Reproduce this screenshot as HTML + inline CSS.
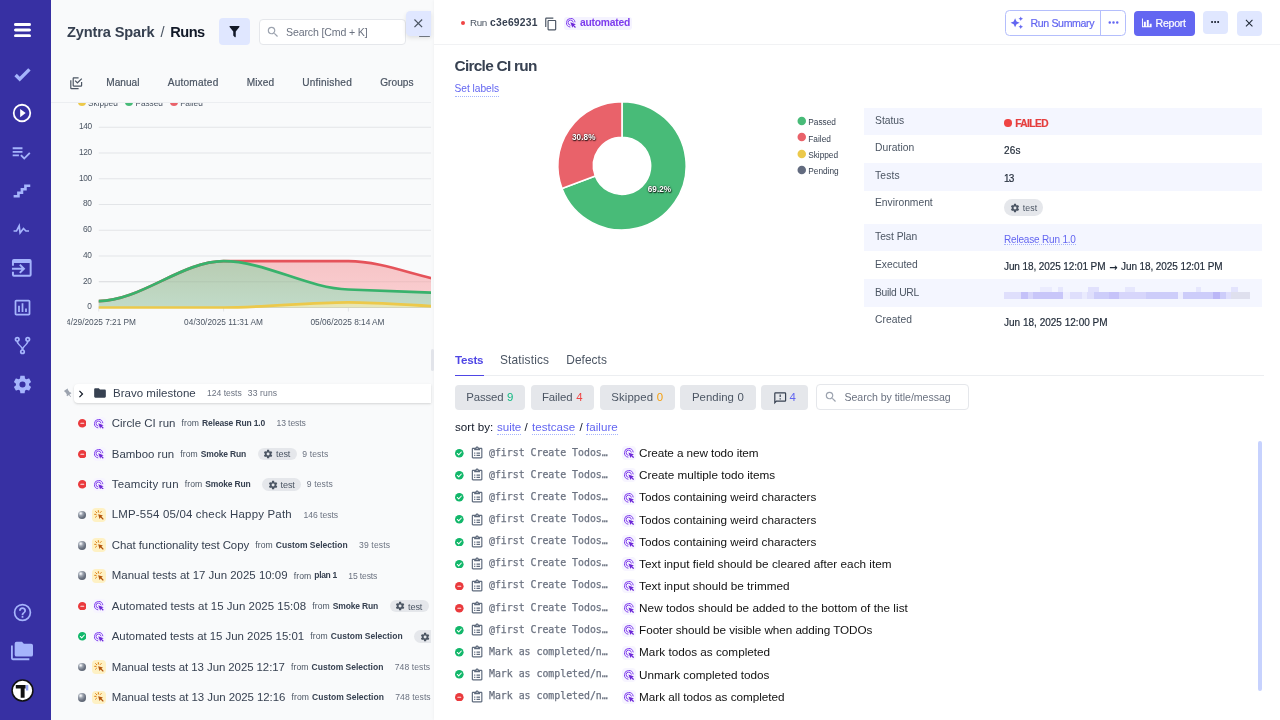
<!DOCTYPE html>
<html lang="en"><head><meta charset="utf-8"><title>Zyntra Spark / Runs</title><style>
*{margin:0;padding:0;box-sizing:border-box}
html,body{width:1280px;height:720px;overflow:hidden;background:#fff}
body{position:relative;font-family:"Liberation Sans",Arial,sans-serif;-webkit-font-smoothing:antialiased}
.t{position:absolute;white-space:nowrap;display:block}
.b{position:absolute;display:block}
.clip{position:absolute;overflow:hidden}
#app{position:absolute;left:0;top:0;width:1280px;height:720px;will-change:transform}
</style></head>
<body>
<div id="app">
<div class="b" style="left:0px;top:0px;width:1280px;height:720px;background:#ffffff;"></div>
<div class="b" style="left:50px;top:0px;width:384px;height:720px;background:#f9fafb;"></div>
<section aria-label="Runs trend chart">
<div class="clip" style="left:51px;top:102.6px;width:380px;height:245.4px">
<div class="b" style="left:26.65px;top:-5.2px;width:8.2px;height:8.2px;background:#ecc94b;border-radius:50%"></div>
<span class="t" style="left:37.00px;top:-7px;font-size:8.3px;line-height:14px;color:#4b5563;letter-spacing:-0.035px;">Skipped</span>
<div class="b" style="left:74.15px;top:-5.2px;width:8.2px;height:8.2px;background:#48bb78;border-radius:50%"></div>
<span class="t" style="left:84.50px;top:-7px;font-size:8.3px;line-height:14px;color:#4b5563;letter-spacing:-0.072px;">Passed</span>
<div class="b" style="left:118.9px;top:-5.2px;width:8.2px;height:8.2px;background:#e9626a;border-radius:50%"></div>
<span class="t" style="left:129.25px;top:-7px;font-size:8.3px;line-height:14px;color:#4b5563;letter-spacing:-0.018px;">Failed</span>
<svg class="b" style="left:0;top:0" width="380" height="245" viewBox="51 103 380 245"><line x1="98.75" x2="431" y1="307.50" y2="307.50" stroke="#e3e5e8" stroke-width="1"/><line x1="98.75" x2="431" y1="281.75" y2="281.75" stroke="#e3e5e8" stroke-width="1"/><line x1="98.75" x2="431" y1="256.00" y2="256.00" stroke="#e3e5e8" stroke-width="1"/><line x1="98.75" x2="431" y1="230.25" y2="230.25" stroke="#e3e5e8" stroke-width="1"/><line x1="98.75" x2="431" y1="204.50" y2="204.50" stroke="#e3e5e8" stroke-width="1"/><line x1="98.75" x2="431" y1="178.75" y2="178.75" stroke="#e3e5e8" stroke-width="1"/><line x1="98.75" x2="431" y1="153.00" y2="153.00" stroke="#e3e5e8" stroke-width="1"/><line x1="98.75" x2="431" y1="127.25" y2="127.25" stroke="#e3e5e8" stroke-width="1"/><line x1="98.75" x2="98.75" y1="307.50" y2="311.50" stroke="#e3e5e8" stroke-width="1"/><line x1="223.60" x2="223.60" y1="307.50" y2="311.50" stroke="#e3e5e8" stroke-width="1"/><line x1="348.40" x2="348.40" y1="307.50" y2="311.50" stroke="#e3e5e8" stroke-width="1"/><defs><linearGradient id="gr" gradientUnits="userSpaceOnUse" x1="0" y1="261" x2="0" y2="307"><stop offset="0" stop-color="#f6c4c6"/><stop offset="1" stop-color="#fbd0d3"/></linearGradient><linearGradient id="gg" gradientUnits="userSpaceOnUse" x1="0" y1="261" x2="0" y2="307"><stop offset="0" stop-color="#b8ccb2"/><stop offset="1" stop-color="#c1dbc8"/></linearGradient><linearGradient id="gy" gradientUnits="userSpaceOnUse" x1="0" y1="300" x2="0" y2="308"><stop offset="0" stop-color="#e6e2a8"/><stop offset="1" stop-color="#e9e8b8"/></linearGradient></defs><path d="M98.75 301.06 C140.37 301.06 181.98 261.15 223.60 261.15 C265.20 261.15 306.80 261.15 348.40 261.15 C390.00 261.15 431.60 284.32 473.20 284.32 C514.80 284.32 556.40 284.32 598.00 284.32 L598.00 307.50 L98.75 307.50 Z" fill="url(#gr)" stroke="none"/><path d="M98.75 301.06 C140.37 301.06 181.98 261.15 223.60 261.15 C265.20 261.15 306.80 288.23 348.40 289.48 C390.00 290.72 431.60 293.12 473.20 294.37 C514.80 295.62 556.40 294.97 598.00 295.27 L598.00 307.50 L98.75 307.50 Z" fill="url(#gg)" stroke="none"/><path d="M98.75 307.50 C140.37 307.50 181.98 307.50 223.60 307.50 C265.20 307.50 306.80 302.35 348.40 302.35 C390.00 302.35 431.60 307.50 473.20 307.50 C514.80 307.50 556.40 307.50 598.00 307.50 L598.00 307.50 L98.75 307.50 Z" fill="url(#gy)" stroke="none"/><line x1="98.75" x2="431" y1="307.50" y2="307.50" stroke="#000" stroke-opacity=".05" stroke-width="1"/><line x1="98.75" x2="431" y1="281.75" y2="281.75" stroke="#000" stroke-opacity=".05" stroke-width="1"/><path d="M98.75 301.06 C140.37 301.06 181.98 261.15 223.60 261.15 C265.20 261.15 306.80 261.15 348.40 261.15 C390.00 261.15 431.60 284.32 473.20 284.32 C514.80 284.32 556.40 284.32 598.00 284.32" fill="none" stroke="#e5535a" stroke-width="2.7" stroke-linejoin="round"/><path d="M98.75 301.06 C140.37 301.06 181.98 261.15 223.60 261.15 C265.20 261.15 306.80 288.23 348.40 289.48 C390.00 290.72 431.60 293.12 473.20 294.37 C514.80 295.62 556.40 294.97 598.00 295.27" fill="none" stroke="#38b26c" stroke-width="2.7" stroke-linejoin="round"/><path d="M98.75 307.50 C140.37 307.50 181.98 307.50 223.60 307.50 C265.20 307.50 306.80 302.35 348.40 302.35 C390.00 302.35 431.60 307.50 473.20 307.50 C514.80 307.50 556.40 307.50 598.00 307.50" fill="none" stroke="#ecc94b" stroke-width="2.7" stroke-linejoin="round"/></svg>
<span class="t" style="left:36.20px;top:196px;font-size:8.3px;line-height:14px;color:#4b5563;">0</span>
<span class="t" style="left:32.10px;top:171px;font-size:8.3px;line-height:14px;color:#4b5563;letter-spacing:-0.366px;">20</span>
<span class="t" style="left:32.10px;top:145px;font-size:8.3px;line-height:14px;color:#4b5563;letter-spacing:-0.366px;">40</span>
<span class="t" style="left:32.10px;top:119px;font-size:8.3px;line-height:14px;color:#4b5563;letter-spacing:-0.366px;">60</span>
<span class="t" style="left:32.10px;top:93px;font-size:8.3px;line-height:14px;color:#4b5563;letter-spacing:-0.366px;">80</span>
<span class="t" style="left:28.10px;top:68px;font-size:8.3px;line-height:14px;color:#4b5563;letter-spacing:-0.449px;">100</span>
<span class="t" style="left:28.10px;top:42px;font-size:8.3px;line-height:14px;color:#4b5563;letter-spacing:-0.449px;">120</span>
<span class="t" style="left:28.10px;top:16px;font-size:8.3px;line-height:14px;color:#4b5563;letter-spacing:-0.449px;">140</span>
<span class="t" style="left:10.50px;top:212px;font-size:8.3px;line-height:14px;color:#4b5563;letter-spacing:-0.014px;">04/29/2025 7:21 PM</span>
<span class="t" style="left:133.10px;top:212px;font-size:8.3px;line-height:14px;color:#4b5563;letter-spacing:0.037px;">04/30/2025 11:31 AM</span>
<span class="t" style="left:259.50px;top:212px;font-size:8.3px;line-height:14px;color:#4b5563;letter-spacing:-0.017px;">05/06/2025 8:14 AM</span>
</div>
<div class="b" style="left:51px;top:314px;width:16px;height:16px;background:#f9fafb;"></div>
</section>
<header aria-label="Runs toolbar">
<span class="t" style="left:67.00px;top:22px;font-size:14.6px;line-height:20px;color:#374151;font-weight:700;letter-spacing:-0.146px;">Zyntra Spark</span>
<span class="t" style="left:160.50px;top:22px;font-size:14.6px;line-height:20px;color:#4b5563;">/</span>
<span class="t" style="left:170.25px;top:22px;font-size:14.6px;line-height:20px;color:#111827;font-weight:700;letter-spacing:-0.500px;">Runs</span>
<div class="b" style="left:218.5px;top:18px;width:31px;height:27px;background:#e0e7ff;border-radius:4px"></div>
<svg class="b" style="left:226.5px;top:24px;" width="15" height="15" viewBox="0 0 24 24"><path fill="#111827" d="M14,12V19.88C14.04,20.18 13.94,20.5 13.71,20.71C13.32,21.1 12.69,21.1 12.3,20.71L10.29,18.7C10.06,18.47 9.96,18.16 10,17.87V12H9.97L4.21,4.62C3.87,4.19 3.95,3.56 4.38,3.22C4.57,3.08 4.78,3 5,3V3H19V3C19.22,3 19.43,3.08 19.62,3.22C20.05,3.56 20.13,4.19 19.79,4.62L14.03,12H14Z"/></svg>
<div class="b" style="left:258.5px;top:18.5px;width:147.5px;height:26px;background:#ffffff;border:1px solid #e5e7eb;border-radius:4px"></div>
<svg class="b" style="left:266px;top:24.6px;" width="14" height="14" viewBox="0 0 24 24"><path fill="#9ca3af" d="M9.5,3A6.5,6.5 0 0,1 16,9.5C16,11.11 15.41,12.59 14.44,13.73L14.71,14H15.5L20.5,19L19,20.5L14,15.5V14.71L13.73,14.44C12.59,15.41 11.11,16 9.5,16A6.5,6.5 0 0,1 3,9.5A6.5,6.5 0 0,1 9.5,3M9.5,5C7,5 5,7 5,9.5C5,12 7,14 9.5,14C12,14 14,12 14,9.5C14,7 12,5 9.5,5Z"/></svg>
<span class="t" style="left:286.00px;top:24px;font-size:10.6px;line-height:16px;color:#6b7280;letter-spacing:-0.153px;">Search [Cmd + K]</span>
<svg class="b" style="left:69.4px;top:76px;" width="14.4" height="14.4" viewBox="0 0 24 24"><path fill="#4b5563" d="M20,16V10H22V16A2,2 0 0,1 20,18H8C6.89,18 6,17.1 6,16V4C6,2.89 6.89,2 8,2H16V4H8V16H20M10.91,7.08L14,10.17L20.59,3.58L22,5L14,13L9.5,8.5L10.91,7.08M16,20V22H4A2,2 0 0,1 2,20V7H4V20H16Z"/></svg>
<span class="t" style="left:106.25px;top:75px;font-size:10.1px;line-height:15px;color:#4b5563;letter-spacing:0.021px;-webkit-text-stroke:.2px #4b5563;">Manual</span>
<span class="t" style="left:167.75px;top:75px;font-size:10.1px;line-height:15px;color:#4b5563;letter-spacing:0.211px;-webkit-text-stroke:.2px #4b5563;">Automated</span>
<span class="t" style="left:246.75px;top:75px;font-size:10.1px;line-height:15px;color:#4b5563;letter-spacing:0.112px;-webkit-text-stroke:.2px #4b5563;">Mixed</span>
<span class="t" style="left:302.25px;top:75px;font-size:10.1px;line-height:15px;color:#4b5563;letter-spacing:0.203px;-webkit-text-stroke:.2px #4b5563;">Unfinished</span>
<span class="t" style="left:380.25px;top:75px;font-size:10.1px;line-height:15px;color:#4b5563;letter-spacing:0.021px;-webkit-text-stroke:.2px #4b5563;">Groups</span>
<div class="b" style="left:51px;top:102px;width:380px;height:1px;background:#eceef1;"></div>
</header>
<section aria-label="Runs list">
<div class="b" style="left:74px;top:383.5px;width:357px;height:19px;background:#ffffff;border-radius:4px 0 0 4px;box-shadow:0 1px 3px rgba(0,0,0,.10),0 1px 2px rgba(0,0,0,.06)"></div>
<svg class="b" style="left:62.5px;top:387.5px;transform:rotate(-35deg)" width="10.5" height="10.5" viewBox="0 0 24 24"><path fill="#9ca3af" d="M16,12V4H17V2H7V4H8V12L6,14V16H11.2V22H12.8V16H18V14L16,12Z"/></svg>
<svg class="b" style="left:73.5px;top:386.5px;" width="14" height="14" viewBox="0 0 24 24"><path fill="#111827" d="M8.59,16.58L13.17,12L8.59,7.41L10,6L16,12L10,18L8.59,16.58Z"/></svg>
<svg class="b" style="left:93.3px;top:386px;" width="14" height="14" viewBox="0 0 24 24"><path fill="#374151" d="M10,4H4C2.89,4 2,4.89 2,6V18A2,2 0 0,0 4,20H20A2,2 0 0,0 22,18V8C22,6.89 21.1,6 20,6H12L10,4Z"/></svg>
<span class="t" style="left:113.00px;top:385px;font-size:11.5px;line-height:16px;color:#374151;letter-spacing:0.020px;">Bravo milestone</span>
<span class="t" style="left:207.00px;top:386px;font-size:8.6px;line-height:14px;color:#6b7280;letter-spacing:-0.017px;">124 tests</span>
<span class="t" style="left:247.75px;top:386px;font-size:8.6px;line-height:14px;color:#6b7280;letter-spacing:0.116px;">33 runs</span>
<div class="clip" style="left:51px;top:405px;width:380px;height:315px">
<svg class="b" style="left:26.50px;top:14.30px" width="8.6" height="8.6" viewBox="0 0 20 20"><circle cx="10" cy="10" r="10" fill="#ea3a3d"/><rect x="5.4" y="8.7" width="9.2" height="2.6" rx="1.1" fill="#fde8e8"/></svg>
<div class="b" style="left:41.5px;top:11.85px;width:13.5px;height:13.5px;background:#f7f5ff;border-radius:4px"></div>
<svg class="b" style="left:43.30px;top:13.80px" width="9.8" height="9.8" viewBox="0 0 24 24"><g fill="none" stroke="#7c3aed" stroke-width="2.3" stroke-linecap="round"><path d="M21.6 9.4A10.4 10.4 0 1 0 9.4 21.6"/><path d="M17.2 9.8A6.2 6.2 0 1 0 9.8 17.2"/></g><path fill="#6d28d9" d="M10.4 10.4L23.6 15.2L19.2 17.1L23.8 21.7L21.7 23.8L17.1 19.2L15.2 23.6Z"/></svg>
<span class="t" style="left:60.75px;top:10px;font-size:11.45px;line-height:16px;color:#374151;letter-spacing:0.010px;">Circle CI run</span>
<span class="t" style="left:130.60px;top:11px;font-size:8.6px;line-height:14px;color:#4b5563;letter-spacing:0.075px;">from</span>
<span class="t" style="left:151.10px;top:11px;font-size:8.5px;line-height:14px;color:#374151;font-weight:700;letter-spacing:-0.147px;">Release Run 1.0</span>
<span class="t" style="left:225.50px;top:11px;font-size:8.6px;line-height:14px;color:#6b7280;letter-spacing:-0.108px;">13 tests</span>
<svg class="b" style="left:26.50px;top:44.73px" width="8.6" height="8.6" viewBox="0 0 20 20"><circle cx="10" cy="10" r="10" fill="#ea3a3d"/><rect x="5.4" y="8.7" width="9.2" height="2.6" rx="1.1" fill="#fde8e8"/></svg>
<div class="b" style="left:41.5px;top:42.28px;width:13.5px;height:13.5px;background:#f7f5ff;border-radius:4px"></div>
<svg class="b" style="left:43.30px;top:44.23px" width="9.8" height="9.8" viewBox="0 0 24 24"><g fill="none" stroke="#7c3aed" stroke-width="2.3" stroke-linecap="round"><path d="M21.6 9.4A10.4 10.4 0 1 0 9.4 21.6"/><path d="M17.2 9.8A6.2 6.2 0 1 0 9.8 17.2"/></g><path fill="#6d28d9" d="M10.4 10.4L23.6 15.2L19.2 17.1L23.8 21.7L21.7 23.8L17.1 19.2L15.2 23.6Z"/></svg>
<span class="t" style="left:60.75px;top:41px;font-size:11.45px;line-height:16px;color:#374151;letter-spacing:0.012px;">Bamboo run</span>
<span class="t" style="left:129.35px;top:42px;font-size:8.6px;line-height:14px;color:#4b5563;letter-spacing:0.075px;">from</span>
<span class="t" style="left:149.85px;top:42px;font-size:8.5px;line-height:14px;color:#374151;font-weight:700;letter-spacing:-0.168px;">Smoke Run</span>
<div class="b" style="left:206.5px;top:42.83px;width:39px;height:12.5px;background:#e5e7eb;border-radius:7px"></div>
<svg class="b" style="left:212.1px;top:44.13px;" width="10.2" height="10.2" viewBox="0 0 24 24"><path fill="#4b5563" d="M12,15.5A3.5,3.5 0 0,1 8.5,12A3.5,3.5 0 0,1 12,8.5A3.5,3.5 0 0,1 15.5,12A3.5,3.5 0 0,1 12,15.5M19.43,12.97C19.47,12.65 19.5,12.33 19.5,12C19.5,11.67 19.47,11.34 19.43,11L21.54,9.37C21.73,9.22 21.78,8.95 21.66,8.73L19.66,5.27C19.54,5.05 19.27,4.96 19.05,5.05L16.56,6.05C16.04,5.66 15.5,5.32 14.87,5.07L14.5,2.42C14.46,2.18 14.25,2 14,2H10C9.75,2 9.54,2.18 9.5,2.42L9.13,5.07C8.5,5.32 7.96,5.66 7.44,6.05L4.95,5.05C4.73,4.96 4.46,5.05 4.34,5.27L2.34,8.73C2.21,8.95 2.27,9.22 2.46,9.37L4.57,11C4.53,11.34 4.5,11.67 4.5,12C4.5,12.33 4.53,12.65 4.57,12.97L2.46,14.63C2.27,14.78 2.21,15.05 2.34,15.27L4.34,18.73C4.46,18.95 4.73,19.03 4.95,18.95L7.44,17.94C7.96,18.34 8.5,18.68 9.13,18.93L9.5,21.58C9.54,21.82 9.75,22 10,22H14C14.25,22 14.46,21.82 14.5,21.58L14.87,18.93C15.5,18.67 16.04,18.34 16.56,17.94L19.05,18.95C19.27,19.03 19.54,18.95 19.66,18.73L21.66,15.27C21.78,15.05 21.73,14.78 21.54,14.63L19.43,12.97Z"/></svg>
<span class="t" style="left:225.10px;top:42px;font-size:9.1px;line-height:14px;color:#4b5563;letter-spacing:-0.117px;">test</span>
<span class="t" style="left:251.30px;top:42px;font-size:8.6px;line-height:14px;color:#6b7280;letter-spacing:0.095px;">9 tests</span>
<svg class="b" style="left:26.50px;top:75.16px" width="8.6" height="8.6" viewBox="0 0 20 20"><circle cx="10" cy="10" r="10" fill="#ea3a3d"/><rect x="5.4" y="8.7" width="9.2" height="2.6" rx="1.1" fill="#fde8e8"/></svg>
<div class="b" style="left:41.5px;top:72.71px;width:13.5px;height:13.5px;background:#f7f5ff;border-radius:4px"></div>
<svg class="b" style="left:43.30px;top:74.66px" width="9.8" height="9.8" viewBox="0 0 24 24"><g fill="none" stroke="#7c3aed" stroke-width="2.3" stroke-linecap="round"><path d="M21.6 9.4A10.4 10.4 0 1 0 9.4 21.6"/><path d="M17.2 9.8A6.2 6.2 0 1 0 9.8 17.2"/></g><path fill="#6d28d9" d="M10.4 10.4L23.6 15.2L19.2 17.1L23.8 21.7L21.7 23.8L17.1 19.2L15.2 23.6Z"/></svg>
<span class="t" style="left:60.75px;top:71px;font-size:11.45px;line-height:16px;color:#374151;letter-spacing:0.175px;">Teamcity run</span>
<span class="t" style="left:133.85px;top:72px;font-size:8.6px;line-height:14px;color:#4b5563;letter-spacing:0.075px;">from</span>
<span class="t" style="left:154.35px;top:72px;font-size:8.5px;line-height:14px;color:#374151;font-weight:700;letter-spacing:-0.168px;">Smoke Run</span>
<div class="b" style="left:211px;top:73.26px;width:39px;height:12.5px;background:#e5e7eb;border-radius:7px"></div>
<svg class="b" style="left:216.6px;top:74.56px;" width="10.2" height="10.2" viewBox="0 0 24 24"><path fill="#4b5563" d="M12,15.5A3.5,3.5 0 0,1 8.5,12A3.5,3.5 0 0,1 12,8.5A3.5,3.5 0 0,1 15.5,12A3.5,3.5 0 0,1 12,15.5M19.43,12.97C19.47,12.65 19.5,12.33 19.5,12C19.5,11.67 19.47,11.34 19.43,11L21.54,9.37C21.73,9.22 21.78,8.95 21.66,8.73L19.66,5.27C19.54,5.05 19.27,4.96 19.05,5.05L16.56,6.05C16.04,5.66 15.5,5.32 14.87,5.07L14.5,2.42C14.46,2.18 14.25,2 14,2H10C9.75,2 9.54,2.18 9.5,2.42L9.13,5.07C8.5,5.32 7.96,5.66 7.44,6.05L4.95,5.05C4.73,4.96 4.46,5.05 4.34,5.27L2.34,8.73C2.21,8.95 2.27,9.22 2.46,9.37L4.57,11C4.53,11.34 4.5,11.67 4.5,12C4.5,12.33 4.53,12.65 4.57,12.97L2.46,14.63C2.27,14.78 2.21,15.05 2.34,15.27L4.34,18.73C4.46,18.95 4.73,19.03 4.95,18.95L7.44,17.94C7.96,18.34 8.5,18.68 9.13,18.93L9.5,21.58C9.54,21.82 9.75,22 10,22H14C14.25,22 14.46,21.82 14.5,21.58L14.87,18.93C15.5,18.67 16.04,18.34 16.56,17.94L19.05,18.95C19.27,19.03 19.54,18.95 19.66,18.73L21.66,15.27C21.78,15.05 21.73,14.78 21.54,14.63L19.43,12.97Z"/></svg>
<span class="t" style="left:229.60px;top:73px;font-size:9.1px;line-height:14px;color:#4b5563;letter-spacing:-0.117px;">test</span>
<span class="t" style="left:255.80px;top:72px;font-size:8.6px;line-height:14px;color:#6b7280;letter-spacing:0.095px;">9 tests</span>
<div class="b" style="left:26.50px;top:105.59px;width:8.6px;height:8.6px;border-radius:50%;background:radial-gradient(circle at 34% 30%,#ffffff 0,#e5e7eb 9%,#9ca3af 28%,#6b7280 58%,#4b5563 100%)"></div>
<div class="b" style="left:41.2px;top:102.99px;width:13.8px;height:13.8px;background:#fef1c4;border-radius:4px"></div>
<svg class="b" style="left:43.00px;top:104.79px" width="10.4" height="10.4" viewBox="0 0 24 24"><g stroke="#d97706" stroke-width="2.3" stroke-linecap="round"><path d="M10 1.6V4.8M1.6 10H4.8M3.8 3.8L6.1 6.1M16.6 3.6L14.4 5.8M3.6 16.6L5.8 14.4"/></g><path fill="#b45309" d="M9.6 9.6L20.6 12.8L17.2 15.1L22.6 20.5L20.5 22.6L15.1 17.2L12.8 20.6Z"/></svg>
<span class="t" style="left:60.75px;top:101px;font-size:11.45px;line-height:16px;color:#374151;letter-spacing:0.195px;">LMP-554 05/04 check Happy Path</span>
<span class="t" style="left:252.40px;top:103px;font-size:8.6px;line-height:14px;color:#6b7280;letter-spacing:-0.017px;">146 tests</span>
<div class="b" style="left:26.50px;top:136.02px;width:8.6px;height:8.6px;border-radius:50%;background:radial-gradient(circle at 34% 30%,#ffffff 0,#e5e7eb 9%,#9ca3af 28%,#6b7280 58%,#4b5563 100%)"></div>
<div class="b" style="left:41.2px;top:133.42px;width:13.8px;height:13.8px;background:#fef1c4;border-radius:4px"></div>
<svg class="b" style="left:43.00px;top:135.22px" width="10.4" height="10.4" viewBox="0 0 24 24"><g stroke="#d97706" stroke-width="2.3" stroke-linecap="round"><path d="M10 1.6V4.8M1.6 10H4.8M3.8 3.8L6.1 6.1M16.6 3.6L14.4 5.8M3.6 16.6L5.8 14.4"/></g><path fill="#b45309" d="M9.6 9.6L20.6 12.8L17.2 15.1L22.6 20.5L20.5 22.6L15.1 17.2L12.8 20.6Z"/></svg>
<span class="t" style="left:60.75px;top:132px;font-size:11.45px;line-height:16px;color:#374151;letter-spacing:-0.067px;">Chat functionality test Copy</span>
<span class="t" style="left:204.35px;top:133px;font-size:8.6px;line-height:14px;color:#4b5563;letter-spacing:0.075px;">from</span>
<span class="t" style="left:224.85px;top:133px;font-size:8.5px;line-height:14px;color:#374151;font-weight:700;letter-spacing:-0.002px;">Custom Selection</span>
<span class="t" style="left:308.00px;top:133px;font-size:8.6px;line-height:14px;color:#6b7280;letter-spacing:0.142px;">39 tests</span>
<div class="b" style="left:26.50px;top:166.45px;width:8.6px;height:8.6px;border-radius:50%;background:radial-gradient(circle at 34% 30%,#ffffff 0,#e5e7eb 9%,#9ca3af 28%,#6b7280 58%,#4b5563 100%)"></div>
<div class="b" style="left:41.2px;top:163.85px;width:13.8px;height:13.8px;background:#fef1c4;border-radius:4px"></div>
<svg class="b" style="left:43.00px;top:165.65px" width="10.4" height="10.4" viewBox="0 0 24 24"><g stroke="#d97706" stroke-width="2.3" stroke-linecap="round"><path d="M10 1.6V4.8M1.6 10H4.8M3.8 3.8L6.1 6.1M16.6 3.6L14.4 5.8M3.6 16.6L5.8 14.4"/></g><path fill="#b45309" d="M9.6 9.6L20.6 12.8L17.2 15.1L22.6 20.5L20.5 22.6L15.1 17.2L12.8 20.6Z"/></svg>
<span class="t" style="left:60.75px;top:162px;font-size:11.45px;line-height:16px;color:#374151;letter-spacing:0.009px;">Manual tests at 17 Jun 2025 10:09</span>
<span class="t" style="left:242.85px;top:164px;font-size:8.6px;line-height:14px;color:#4b5563;letter-spacing:0.075px;">from</span>
<span class="t" style="left:263.35px;top:163px;font-size:8.5px;line-height:14px;color:#374151;font-weight:700;letter-spacing:-0.344px;">plan 1</span>
<span class="t" style="left:297.25px;top:164px;font-size:8.6px;line-height:14px;color:#6b7280;letter-spacing:-0.140px;">15 tests</span>
<svg class="b" style="left:26.50px;top:196.88px" width="8.6" height="8.6" viewBox="0 0 20 20"><circle cx="10" cy="10" r="10" fill="#ea3a3d"/><rect x="5.4" y="8.7" width="9.2" height="2.6" rx="1.1" fill="#fde8e8"/></svg>
<div class="b" style="left:41.5px;top:194.43px;width:13.5px;height:13.5px;background:#f7f5ff;border-radius:4px"></div>
<svg class="b" style="left:43.30px;top:196.38px" width="9.8" height="9.8" viewBox="0 0 24 24"><g fill="none" stroke="#7c3aed" stroke-width="2.3" stroke-linecap="round"><path d="M21.6 9.4A10.4 10.4 0 1 0 9.4 21.6"/><path d="M17.2 9.8A6.2 6.2 0 1 0 9.8 17.2"/></g><path fill="#6d28d9" d="M10.4 10.4L23.6 15.2L19.2 17.1L23.8 21.7L21.7 23.8L17.1 19.2L15.2 23.6Z"/></svg>
<span class="t" style="left:60.75px;top:193px;font-size:11.45px;line-height:16px;color:#374151;letter-spacing:0.027px;">Automated tests at 15 Jun 2025 15:08</span>
<span class="t" style="left:261.35px;top:194px;font-size:8.6px;line-height:14px;color:#4b5563;letter-spacing:0.075px;">from</span>
<span class="t" style="left:281.85px;top:194px;font-size:8.5px;line-height:14px;color:#374151;font-weight:700;letter-spacing:-0.168px;">Smoke Run</span>
<div class="b" style="left:338.5px;top:194.98px;width:39px;height:12.5px;background:#e5e7eb;border-radius:7px"></div>
<svg class="b" style="left:344.1px;top:196.28px;" width="10.2" height="10.2" viewBox="0 0 24 24"><path fill="#4b5563" d="M12,15.5A3.5,3.5 0 0,1 8.5,12A3.5,3.5 0 0,1 12,8.5A3.5,3.5 0 0,1 15.5,12A3.5,3.5 0 0,1 12,15.5M19.43,12.97C19.47,12.65 19.5,12.33 19.5,12C19.5,11.67 19.47,11.34 19.43,11L21.54,9.37C21.73,9.22 21.78,8.95 21.66,8.73L19.66,5.27C19.54,5.05 19.27,4.96 19.05,5.05L16.56,6.05C16.04,5.66 15.5,5.32 14.87,5.07L14.5,2.42C14.46,2.18 14.25,2 14,2H10C9.75,2 9.54,2.18 9.5,2.42L9.13,5.07C8.5,5.32 7.96,5.66 7.44,6.05L4.95,5.05C4.73,4.96 4.46,5.05 4.34,5.27L2.34,8.73C2.21,8.95 2.27,9.22 2.46,9.37L4.57,11C4.53,11.34 4.5,11.67 4.5,12C4.5,12.33 4.53,12.65 4.57,12.97L2.46,14.63C2.27,14.78 2.21,15.05 2.34,15.27L4.34,18.73C4.46,18.95 4.73,19.03 4.95,18.95L7.44,17.94C7.96,18.34 8.5,18.68 9.13,18.93L9.5,21.58C9.54,21.82 9.75,22 10,22H14C14.25,22 14.46,21.82 14.5,21.58L14.87,18.93C15.5,18.67 16.04,18.34 16.56,17.94L19.05,18.95C19.27,19.03 19.54,18.95 19.66,18.73L21.66,15.27C21.78,15.05 21.73,14.78 21.54,14.63L19.43,12.97Z"/></svg>
<span class="t" style="left:357.10px;top:195px;font-size:9.1px;line-height:14px;color:#4b5563;letter-spacing:-0.117px;">test</span>
<svg class="b" style="left:26.50px;top:227.31px" width="8.6" height="8.6" viewBox="0 0 20 20"><circle cx="10" cy="10" r="10" fill="#12b76a"/><path d="M5.3 10.4L8.6 13.6L14.8 7" fill="none" stroke="#fff" stroke-width="2.4" stroke-linecap="round" stroke-linejoin="round"/></svg>
<div class="b" style="left:41.5px;top:224.86px;width:13.5px;height:13.5px;background:#f7f5ff;border-radius:4px"></div>
<svg class="b" style="left:43.30px;top:226.81px" width="9.8" height="9.8" viewBox="0 0 24 24"><g fill="none" stroke="#7c3aed" stroke-width="2.3" stroke-linecap="round"><path d="M21.6 9.4A10.4 10.4 0 1 0 9.4 21.6"/><path d="M17.2 9.8A6.2 6.2 0 1 0 9.8 17.2"/></g><path fill="#6d28d9" d="M10.4 10.4L23.6 15.2L19.2 17.1L23.8 21.7L21.7 23.8L17.1 19.2L15.2 23.6Z"/></svg>
<span class="t" style="left:60.75px;top:223px;font-size:11.45px;line-height:16px;color:#374151;letter-spacing:-0.028px;">Automated tests at 15 Jun 2025 15:01</span>
<span class="t" style="left:259.35px;top:224px;font-size:8.6px;line-height:14px;color:#4b5563;letter-spacing:0.075px;">from</span>
<span class="t" style="left:279.85px;top:224px;font-size:8.5px;line-height:14px;color:#374151;font-weight:700;letter-spacing:-0.002px;">Custom Selection</span>
<div class="b" style="left:363px;top:225.41px;width:39px;height:12.5px;background:#e5e7eb;border-radius:7px"></div>
<svg class="b" style="left:368.6px;top:226.71px;" width="10.2" height="10.2" viewBox="0 0 24 24"><path fill="#4b5563" d="M12,15.5A3.5,3.5 0 0,1 8.5,12A3.5,3.5 0 0,1 12,8.5A3.5,3.5 0 0,1 15.5,12A3.5,3.5 0 0,1 12,15.5M19.43,12.97C19.47,12.65 19.5,12.33 19.5,12C19.5,11.67 19.47,11.34 19.43,11L21.54,9.37C21.73,9.22 21.78,8.95 21.66,8.73L19.66,5.27C19.54,5.05 19.27,4.96 19.05,5.05L16.56,6.05C16.04,5.66 15.5,5.32 14.87,5.07L14.5,2.42C14.46,2.18 14.25,2 14,2H10C9.75,2 9.54,2.18 9.5,2.42L9.13,5.07C8.5,5.32 7.96,5.66 7.44,6.05L4.95,5.05C4.73,4.96 4.46,5.05 4.34,5.27L2.34,8.73C2.21,8.95 2.27,9.22 2.46,9.37L4.57,11C4.53,11.34 4.5,11.67 4.5,12C4.5,12.33 4.53,12.65 4.57,12.97L2.46,14.63C2.27,14.78 2.21,15.05 2.34,15.27L4.34,18.73C4.46,18.95 4.73,19.03 4.95,18.95L7.44,17.94C7.96,18.34 8.5,18.68 9.13,18.93L9.5,21.58C9.54,21.82 9.75,22 10,22H14C14.25,22 14.46,21.82 14.5,21.58L14.87,18.93C15.5,18.67 16.04,18.34 16.56,17.94L19.05,18.95C19.27,19.03 19.54,18.95 19.66,18.73L21.66,15.27C21.78,15.05 21.73,14.78 21.54,14.63L19.43,12.97Z"/></svg>
<span class="t" style="left:381.60px;top:225px;font-size:9.1px;line-height:14px;color:#4b5563;letter-spacing:-0.117px;">test</span>
<div class="b" style="left:26.50px;top:257.74px;width:8.6px;height:8.6px;border-radius:50%;background:radial-gradient(circle at 34% 30%,#ffffff 0,#e5e7eb 9%,#9ca3af 28%,#6b7280 58%,#4b5563 100%)"></div>
<div class="b" style="left:41.2px;top:255.14px;width:13.8px;height:13.8px;background:#fef1c4;border-radius:4px"></div>
<svg class="b" style="left:43.00px;top:256.94px" width="10.4" height="10.4" viewBox="0 0 24 24"><g stroke="#d97706" stroke-width="2.3" stroke-linecap="round"><path d="M10 1.6V4.8M1.6 10H4.8M3.8 3.8L6.1 6.1M16.6 3.6L14.4 5.8M3.6 16.6L5.8 14.4"/></g><path fill="#b45309" d="M9.6 9.6L20.6 12.8L17.2 15.1L22.6 20.5L20.5 22.6L15.1 17.2L12.8 20.6Z"/></svg>
<span class="t" style="left:60.75px;top:254px;font-size:11.45px;line-height:16px;color:#374151;letter-spacing:-0.074px;">Manual tests at 13 Jun 2025 12:17</span>
<span class="t" style="left:240.10px;top:255px;font-size:8.6px;line-height:14px;color:#4b5563;letter-spacing:0.075px;">from</span>
<span class="t" style="left:260.60px;top:255px;font-size:8.5px;line-height:14px;color:#374151;font-weight:700;letter-spacing:-0.002px;">Custom Selection</span>
<span class="t" style="left:343.75px;top:255px;font-size:8.6px;line-height:14px;color:#6b7280;letter-spacing:0.067px;">748 tests</span>
<div class="b" style="left:26.50px;top:288.17px;width:8.6px;height:8.6px;border-radius:50%;background:radial-gradient(circle at 34% 30%,#ffffff 0,#e5e7eb 9%,#9ca3af 28%,#6b7280 58%,#4b5563 100%)"></div>
<div class="b" style="left:41.2px;top:285.57px;width:13.8px;height:13.8px;background:#fef1c4;border-radius:4px"></div>
<svg class="b" style="left:43.00px;top:287.37px" width="10.4" height="10.4" viewBox="0 0 24 24"><g stroke="#d97706" stroke-width="2.3" stroke-linecap="round"><path d="M10 1.6V4.8M1.6 10H4.8M3.8 3.8L6.1 6.1M16.6 3.6L14.4 5.8M3.6 16.6L5.8 14.4"/></g><path fill="#b45309" d="M9.6 9.6L20.6 12.8L17.2 15.1L22.6 20.5L20.5 22.6L15.1 17.2L12.8 20.6Z"/></svg>
<span class="t" style="left:60.75px;top:284px;font-size:11.45px;line-height:16px;color:#374151;letter-spacing:-0.059px;">Manual tests at 13 Jun 2025 12:16</span>
<span class="t" style="left:240.60px;top:285px;font-size:8.6px;line-height:14px;color:#4b5563;letter-spacing:0.075px;">from</span>
<span class="t" style="left:261.10px;top:285px;font-size:8.5px;line-height:14px;color:#374151;font-weight:700;letter-spacing:-0.002px;">Custom Selection</span>
<span class="t" style="left:344.25px;top:285px;font-size:8.6px;line-height:14px;color:#6b7280;letter-spacing:0.067px;">748 tests</span>
</div>
</section>
<nav aria-label="Main navigation">
<div class="b" style="left:0px;top:0px;width:50.6px;height:720px;background:#3730a3;"></div>
<svg class="b" style="left:13.9px;top:22.8px" width="17" height="14.2" viewBox="0 0 17 14.2"><g fill="#fff"><rect x="0" y="0" width="17" height="3" rx="1.5"/><rect x="0" y="5.6" width="17" height="3" rx="1.5"/><rect x="0" y="11.2" width="17" height="3" rx="1.5"/></g></svg>
<svg class="b" style="left:11.8px;top:64.2px;" width="20.6" height="20.6" viewBox="0 0 24 24"><path fill="#a5b4fc" d="M9,20.42L2.79,14.21L5.62,11.38L9,14.77L18.88,4.88L21.71,7.71L9,20.42Z"/></svg>
<svg class="b" style="left:11.1px;top:102.1px;" width="22" height="22" viewBox="0 0 24 24"><path fill="#ffffff" d="M12,20C7.59,20 4,16.41 4,12C4,7.59 7.59,4 12,4C16.41,4 20,7.59 20,12C20,16.41 16.41,20 12,20M12,2A10,10 0 0,0 2,12A10,10 0 0,0 12,22A10,10 0 0,0 22,12A10,10 0 0,0 12,2M10,16.5L16,12L10,7.5V16.5Z"/></svg>
<svg class="b" style="left:10.4px;top:141.8px;" width="21.4" height="21.4" viewBox="0 0 24 24"><path fill="#a5b4fc" d="M14 10H3V12H14V10M14 6H3V8H14V6M3 16H10V14H3V16M21.5 11.5L23 13L16 20L11.5 15.5L13 14L16 17L21.5 11.5Z"/></svg>
<svg class="b" style="left:11.3px;top:180px;" width="21" height="21" viewBox="0 0 24 24"><path fill="#a5b4fc" d="M15,5V9H11V13H7V17H3V20H10V16H14V12H18V8H22V5H15Z"/></svg>
<svg class="b" style="left:11.3px;top:218.8px;" width="20.6" height="20.6" viewBox="0 0 24 24"><path fill="#a5b4fc" d="M3,13H5.79L10.1,4.79L11.28,13.75L14.5,9.66L17.83,13H21V15H17L14.67,12.67L9.92,18.73L8.94,11.31L7,15H3V13Z"/></svg>
<svg class="b" style="left:9.9px;top:256.2px;" width="23.6" height="23.6" viewBox="0 0 24 24"><path fill="#a5b4fc" d="M4,3H20A2,2 0 0,1 22,5V19A2,2 0 0,1 20,21H4A2,2 0 0,1 2,19V16H4V19H20V7H4V10H2V5A2,2 0 0,1 4,3ZM2,12H11.76L9.26,9.5L10.67,8.08L15.59,13L10.67,17.92L9.26,16.5L11.76,14H2Z"/></svg>
<svg class="b" style="left:11.5px;top:296.5px;" width="21" height="21" viewBox="0 0 24 24"><path fill="#a5b4fc" d="M9 17H7V10H9V17M13 17H11V7H13V17M17 17H15V13H17V17M19 19H5V5H19V19.1M19 3H5C3.9 3 3 3.9 3 5V19C3 20.1 3.9 21 5 21H19C20.1 21 21 20.1 21 19V5C21 3.9 20.1 3 19 3Z"/></svg>
<svg class="b" style="left:11.5px;top:335px;" width="21" height="21" viewBox="0 0 24 24"><path fill="#a5b4fc" d="M6,2A3,3 0 0,1 9,5C9,6.28 8.19,7.38 7.06,7.81C7.15,8.27 7.39,8.83 8,9.63C9,10.92 11,12.83 12,14.17C13,12.83 15,10.92 16,9.63C16.61,8.83 16.85,8.27 16.94,7.81C15.81,7.38 15,6.28 15,5A3,3 0 0,1 18,2A3,3 0 0,1 21,5C21,6.32 20.14,7.45 18.95,7.85C18.87,8.37 18.64,9 18,9.83C17,11.17 15,13.08 14,14.38C13.39,15.17 13.15,15.73 13.06,16.19C14.19,16.62 15,17.72 15,19A3,3 0 0,1 12,22A3,3 0 0,1 9,19C9,17.72 9.81,16.62 10.94,16.19C10.85,15.73 10.61,15.17 10,14.38C9,13.08 7,11.17 6,9.83C5.36,9 5.13,8.37 5.05,7.85C3.86,7.45 3,6.32 3,5A3,3 0 0,1 6,2M6,4A1,1 0 0,0 5,5A1,1 0 0,0 6,6A1,1 0 0,0 7,5A1,1 0 0,0 6,4M18,4A1,1 0 0,0 17,5A1,1 0 0,0 18,6A1,1 0 0,0 19,5A1,1 0 0,0 18,4M12,18A1,1 0 0,0 11,19A1,1 0 0,0 12,20A1,1 0 0,0 13,19A1,1 0 0,0 12,18Z"/></svg>
<svg class="b" style="left:11.5px;top:374px;" width="21" height="21" viewBox="0 0 24 24"><path fill="#a5b4fc" d="M12,15.5A3.5,3.5 0 0,1 8.5,12A3.5,3.5 0 0,1 12,8.5A3.5,3.5 0 0,1 15.5,12A3.5,3.5 0 0,1 12,15.5M19.43,12.97C19.47,12.65 19.5,12.33 19.5,12C19.5,11.67 19.47,11.34 19.43,11L21.54,9.37C21.73,9.22 21.78,8.95 21.66,8.73L19.66,5.27C19.54,5.05 19.27,4.96 19.05,5.05L16.56,6.05C16.04,5.66 15.5,5.32 14.87,5.07L14.5,2.42C14.46,2.18 14.25,2 14,2H10C9.75,2 9.54,2.18 9.5,2.42L9.13,5.07C8.5,5.32 7.96,5.66 7.44,6.05L4.95,5.05C4.73,4.96 4.46,5.05 4.34,5.27L2.34,8.73C2.21,8.95 2.27,9.22 2.46,9.37L4.57,11C4.53,11.34 4.5,11.67 4.5,12C4.5,12.33 4.53,12.65 4.57,12.97L2.46,14.63C2.27,14.78 2.21,15.05 2.34,15.27L4.34,18.73C4.46,18.95 4.73,19.03 4.95,18.95L7.44,17.94C7.96,18.34 8.5,18.68 9.13,18.93L9.5,21.58C9.54,21.82 9.75,22 10,22H14C14.25,22 14.46,21.82 14.5,21.58L14.87,18.93C15.5,18.67 16.04,18.34 16.56,17.94L19.05,18.95C19.27,19.03 19.54,18.95 19.66,18.73L21.66,15.27C21.78,15.05 21.73,14.78 21.54,14.63L19.43,12.97Z"/></svg>
<svg class="b" style="left:11.5px;top:601.5px;" width="21" height="21" viewBox="0 0 24 24"><path fill="#a5b4fc" d="M11,18H13V16H11V18M12,2A10,10 0 0,0 2,12A10,10 0 0,0 12,22A10,10 0 0,0 22,12A10,10 0 0,0 12,2M12,20C7.59,20 4,16.41 4,12C4,7.59 7.59,4 12,4C16.41,4 20,7.59 20,12C20,16.41 16.41,20 12,20M12,6A4,4 0 0,0 8,10H10A2,2 0 0,1 12,8A2,2 0 0,1 14,10C14,12 11,11.75 11,15H13C13,12.75 16,12.5 16,10A4,4 0 0,0 12,6Z"/></svg>
<svg class="b" style="left:11px;top:640px;" width="22" height="22" viewBox="0 0 24 24"><path fill="#a5b4fc" d="M22,4H14L12,2H6A2,2 0 0,0 4,4V16A2,2 0 0,0 6,18H22A2,2 0 0,0 24,16V6A2,2 0 0,0 22,4M2,6H0V11H0V20A2,2 0 0,0 2,22H20V20H2V6Z"/></svg>
<svg class="b" style="left:11.3px;top:678.5px" width="23" height="23" viewBox="0 0 23 23"><circle cx="11.5" cy="11.5" r="10.4" fill="#fff" stroke="#111" stroke-width="1.5"/><path d="M4.8 6H14.6V9.5H13.6V18.8H9.7V9.5H4.8Z" fill="#111"/><path d="M14.9 6H17.3V11.5H14.9Z" fill="#93a5f5"/></svg>
</nav>
<main aria-label="Run details">
<div class="b" style="left:434.3px;top:0px;width:846px;height:720px;background:#ffffff;box-shadow:-1.5px 0 3px rgba(0,0,0,.045)"></div>
<div class="b" style="left:431.2px;top:348.8px;width:3.2px;height:21.8px;background:#e2e4ea;border-radius:2px"></div>
<div class="b" style="left:406.3px;top:10.8px;width:24.7px;height:24.8px;background:#e0e7ff;border-radius:4.5px 0 0 4.5px;box-shadow:0 2px 4px rgba(0,0,0,.10)"></div>
<svg class="b" style="left:411.1px;top:15.7px;" width="14.6" height="14.6" viewBox="0 0 24 24"><path fill="#4b5563" d="M19,6.41L17.59,5L12,10.59L6.41,5L5,6.41L10.59,12L5,17.59L6.41,19L12,13.41L17.59,19L19,17.59L13.41,12L19,6.41Z"/></svg>
<div class="b" style="left:419.3px;top:35.7px;width:10.4px;height:1.3px;background:rgba(31,41,55,.6);border-radius:1px"></div>
<div class="b" style="left:434px;top:43.5px;width:846px;height:1px;background:#f1f2f4;"></div>
<div class="b" style="left:460.8px;top:20.8px;width:4.6px;height:4.6px;background:#ef4444;border-radius:50%"></div>
<span class="t" style="left:470.00px;top:15px;font-size:9.8px;line-height:15px;color:#4b5563;letter-spacing:-0.426px;">Run</span>
<span class="t" style="left:490.00px;top:15px;font-size:10.3px;line-height:15px;color:#374151;font-weight:700;letter-spacing:0.240px;">c3e69231</span>
<svg class="b" style="left:543.5px;top:16.5px;" width="14" height="14" viewBox="0 0 24 24"><path fill="#4b5563" d="M19,21H8V7H19M19,5H8A2,2 0 0,0 6,7V21A2,2 0 0,0 8,23H19A2,2 0 0,0 21,21V7A2,2 0 0,0 19,5M16,1H4A2,2 0 0,0 2,3V17H4V3H16V1Z"/></svg>
<div class="b" style="left:563.5px;top:16.5px;width:68.5px;height:13px;background:#f5f3ff;border-radius:3px"></div>
<svg class="b" style="left:566.30px;top:18.10px" width="10" height="10" viewBox="0 0 24 24"><g fill="none" stroke="#7c3aed" stroke-width="2.3" stroke-linecap="round"><path d="M21.6 9.4A10.4 10.4 0 1 0 9.4 21.6"/><path d="M17.2 9.8A6.2 6.2 0 1 0 9.8 17.2"/></g><path fill="#6d28d9" d="M10.4 10.4L23.6 15.2L19.2 17.1L23.8 21.7L21.7 23.8L17.1 19.2L15.2 23.6Z"/></svg>
<span class="t" style="left:580.00px;top:15px;font-size:10.3px;line-height:15px;color:#7c3aed;font-weight:700;letter-spacing:-0.231px;">automated</span>
<div class="b" style="left:1005px;top:10.3px;width:120.8px;height:25.4px;background:#ffffff;border:1px solid #b4befc;border-radius:4.5px"></div>
<div class="b" style="left:1100px;top:10.3px;width:1px;height:25.4px;background:#b4befc;"></div>
<svg class="b" style="left:1010.2px;top:16px;" width="13.6" height="13.6" viewBox="0 0 24 24"><path fill="#6366f1" d="M19,1L17.74,3.75L15,5L17.74,6.26L19,9L20.25,6.26L23,5L20.25,3.75M9,4L6.5,9.5L1,12L6.5,14.5L9,20L11.5,14.5L17,12L11.5,9.5M19,15L17.74,17.74L15,19L17.74,20.25L19,23L20.25,20.25L23,19L20.25,17.74"/></svg>
<span class="t" style="left:1030.50px;top:15px;font-size:10.6px;line-height:16px;color:#6366f1;letter-spacing:-0.367px;-webkit-text-stroke:.2px #6366f1;">Run Summary</span>
<svg class="b" style="left:1105.5px;top:15.4px;" width="15" height="15" viewBox="0 0 24 24"><path fill="#6366f1" d="M16,12A2,2 0 0,1 18,10A2,2 0 0,1 20,12A2,2 0 0,1 18,14A2,2 0 0,1 16,12M10,12A2,2 0 0,1 12,10A2,2 0 0,1 14,12A2,2 0 0,1 12,14A2,2 0 0,1 10,12M4,12A2,2 0 0,1 6,10A2,2 0 0,1 8,12A2,2 0 0,1 6,14A2,2 0 0,1 4,12Z"/></svg>
<div class="b" style="left:1134.2px;top:10.5px;width:60.6px;height:25.3px;background:#6366f1;border-radius:4px"></div>
<svg class="b" style="left:1140.8px;top:17.3px;" width="11.6" height="11.6" viewBox="0 0 24 24"><path fill="#ffffff" d="M22,21H2V3H4V19H6V10H10V19H12V6H16V19H18V14H22V21Z"/></svg>
<span class="t" style="left:1155.60px;top:15px;font-size:10.6px;line-height:16px;color:#ffffff;letter-spacing:-0.269px;-webkit-text-stroke:.2px #fff;">Report</span>
<div class="b" style="left:1202.7px;top:10.6px;width:25.6px;height:23.4px;background:#e0e7ff;border-radius:4px"></div>
<svg class="b" style="left:1209.3px;top:16.3px;" width="12.2" height="12.2" viewBox="0 0 24 24"><path fill="#111827" d="M16,12A2,2 0 0,1 18,10A2,2 0 0,1 20,12A2,2 0 0,1 18,14A2,2 0 0,1 16,12M10,12A2,2 0 0,1 12,10A2,2 0 0,1 14,12A2,2 0 0,1 12,14A2,2 0 0,1 10,12M4,12A2,2 0 0,1 6,10A2,2 0 0,1 8,12A2,2 0 0,1 6,14A2,2 0 0,1 4,12Z"/></svg>
<div class="b" style="left:1237px;top:10.6px;width:25.4px;height:25.2px;background:#e0e7ff;border-radius:4px"></div>
<svg class="b" style="left:1243.4px;top:16.8px;" width="12.4" height="12.4" viewBox="0 0 24 24"><path fill="#1f2937" d="M19,6.41L17.59,5L12,10.59L6.41,5L5,6.41L10.59,12L5,17.59L6.41,19L12,13.41L17.59,19L19,17.59L13.41,12L19,6.41Z"/></svg>
<span class="t" style="left:454.50px;top:55px;font-size:15.4px;line-height:21px;color:#374151;font-weight:700;letter-spacing:-0.717px;">Circle CI run</span>
<span class="t" style="left:454.50px;top:81px;font-size:10.2px;line-height:15px;color:#6366f1;letter-spacing:-0.029px;">Set labels</span>
<div class="b" style="left:454.5px;top:95.7px;width:44.5px;height:1px;border-top:1px dotted #a5b4fc"></div>
<svg class="b" style="left:540px;top:98px" width="170" height="136" viewBox="540 98 170 136"><path d="M622.00 101.60 A64.2 64.2 0 1 1 561.97 188.57 L595.26 175.94 A28.6 28.6 0 1 0 622.00 137.20 Z" fill="#48bb78" stroke="#fff" stroke-width="1.6" stroke-linejoin="round"/><path d="M561.97 188.57 A64.2 64.2 0 0 1 622.00 101.60 L622.00 137.20 A28.6 28.6 0 0 0 595.26 175.94 Z" fill="#e9626a" stroke="#fff" stroke-width="1.6" stroke-linejoin="round"/></svg>
<span class="t" style="left:572.00px;top:131px;font-size:8.2px;line-height:13px;color:#ffffff;font-weight:700;letter-spacing:0.050px;text-shadow:.6px .8px 1.2px rgba(0,0,0,.85),0 0 2px rgba(0,0,0,.7);">30.8%</span>
<span class="t" style="left:647.70px;top:183px;font-size:8.2px;line-height:13px;color:#ffffff;font-weight:700;letter-spacing:0.050px;text-shadow:.6px .8px 1.2px rgba(0,0,0,.85),0 0 2px rgba(0,0,0,.7);">69.2%</span>
<svg class="b" style="left:796px;top:115.25px" width="12" height="12" viewBox="0 0 12 12"><circle cx="5.75" cy="6" r="4.25" fill="#48bb78"/></svg>
<span class="t" style="left:808.25px;top:115px;font-size:8.3px;line-height:14px;color:#374151;letter-spacing:0.011px;">Passed</span>
<svg class="b" style="left:796px;top:131.42px" width="12" height="12" viewBox="0 0 12 12"><circle cx="5.75" cy="6" r="4.25" fill="#e9626a"/></svg>
<span class="t" style="left:808.25px;top:132px;font-size:8.3px;line-height:14px;color:#374151;letter-spacing:0.024px;">Failed</span>
<svg class="b" style="left:796px;top:147.59px" width="12" height="12" viewBox="0 0 12 12"><circle cx="5.75" cy="6" r="4.25" fill="#ecc94b"/></svg>
<span class="t" style="left:808.25px;top:148px;font-size:8.3px;line-height:14px;color:#374151;letter-spacing:-0.035px;">Skipped</span>
<svg class="b" style="left:796px;top:163.76px" width="12" height="12" viewBox="0 0 12 12"><circle cx="5.75" cy="6" r="4.25" fill="#626b7f"/></svg>
<span class="t" style="left:808.25px;top:164px;font-size:8.3px;line-height:14px;color:#374151;letter-spacing:0.006px;">Pending</span>
<div class="b" style="left:863.5px;top:107.5px;width:398.5px;height:27.5px;background:#f4f6ff;"></div>
<div class="b" style="left:863.5px;top:163px;width:398.5px;height:27.5px;background:#f4f6ff;"></div>
<div class="b" style="left:863.5px;top:223.5px;width:398.5px;height:27.75px;background:#f4f6ff;"></div>
<div class="b" style="left:863.5px;top:279px;width:398.5px;height:27.75px;background:#f4f6ff;"></div>
<span class="t" style="left:875.00px;top:113px;font-size:10.3px;line-height:15px;color:#4b5563;letter-spacing:0.008px;">Status</span>
<span class="t" style="left:875.00px;top:140px;font-size:10.3px;line-height:15px;color:#4b5563;letter-spacing:0.040px;">Duration</span>
<span class="t" style="left:875.00px;top:168px;font-size:10.3px;line-height:15px;color:#4b5563;letter-spacing:0.142px;">Tests</span>
<span class="t" style="left:875.00px;top:195px;font-size:10.3px;line-height:15px;color:#4b5563;letter-spacing:-0.007px;">Environment</span>
<span class="t" style="left:875.00px;top:229px;font-size:10.3px;line-height:15px;color:#4b5563;letter-spacing:-0.013px;">Test Plan</span>
<span class="t" style="left:875.00px;top:257px;font-size:10.3px;line-height:15px;color:#4b5563;letter-spacing:-0.024px;">Executed</span>
<span class="t" style="left:875.00px;top:285px;font-size:10.3px;line-height:15px;color:#4b5563;letter-spacing:-0.263px;">Build URL</span>
<span class="t" style="left:875.00px;top:312px;font-size:10.3px;line-height:15px;color:#4b5563;letter-spacing:0.051px;">Created</span>
<div class="b" style="left:1004.3px;top:119.3px;width:7.4px;height:7.4px;background:#ef4444;border-radius:50%"></div>
<span class="t" style="left:1015.25px;top:116px;font-size:10.2px;line-height:15px;color:#e53e3e;font-weight:700;letter-spacing:-0.586px;-webkit-text-stroke:.2px #e53e3e;">FAILED</span>
<span class="t" style="left:1004.00px;top:143px;font-size:10px;line-height:15px;color:#1f2937;letter-spacing:0.209px;-webkit-text-stroke:.18px #1f2937;">26s</span>
<span class="t" style="left:1004.00px;top:171px;font-size:10px;line-height:15px;color:#1f2937;letter-spacing:-0.687px;-webkit-text-stroke:.18px #1f2937;">13</span>
<div class="b" style="left:1004px;top:199.25px;width:38.5px;height:16.25px;background:#e5e7eb;border-radius:8.2px"></div>
<svg class="b" style="left:1009.8px;top:202.9px;" width="10" height="10" viewBox="0 0 24 24"><path fill="#4b5563" d="M12,15.5A3.5,3.5 0 0,1 8.5,12A3.5,3.5 0 0,1 12,8.5A3.5,3.5 0 0,1 15.5,12A3.5,3.5 0 0,1 12,15.5M19.43,12.97C19.47,12.65 19.5,12.33 19.5,12C19.5,11.67 19.47,11.34 19.43,11L21.54,9.37C21.73,9.22 21.78,8.95 21.66,8.73L19.66,5.27C19.54,5.05 19.27,4.96 19.05,5.05L16.56,6.05C16.04,5.66 15.5,5.32 14.87,5.07L14.5,2.42C14.46,2.18 14.25,2 14,2H10C9.75,2 9.54,2.18 9.5,2.42L9.13,5.07C8.5,5.32 7.96,5.66 7.44,6.05L4.95,5.05C4.73,4.96 4.46,5.05 4.34,5.27L2.34,8.73C2.21,8.95 2.27,9.22 2.46,9.37L4.57,11C4.53,11.34 4.5,11.67 4.5,12C4.5,12.33 4.53,12.65 4.57,12.97L2.46,14.63C2.27,14.78 2.21,15.05 2.34,15.27L4.34,18.73C4.46,18.95 4.73,19.03 4.95,18.95L7.44,17.94C7.96,18.34 8.5,18.68 9.13,18.93L9.5,21.58C9.54,21.82 9.75,22 10,22H14C14.25,22 14.46,21.82 14.5,21.58L14.87,18.93C15.5,18.67 16.04,18.34 16.56,17.94L19.05,18.95C19.27,19.03 19.54,18.95 19.66,18.73L21.66,15.27C21.78,15.05 21.73,14.78 21.54,14.63L19.43,12.97Z"/></svg>
<span class="t" style="left:1022.75px;top:201px;font-size:8.8px;line-height:14px;color:#4b5563;letter-spacing:0.079px;">test</span>
<span class="t" style="left:1004.00px;top:232px;font-size:10px;line-height:15px;color:#6366f1;letter-spacing:-0.183px;">Release Run 1.0</span>
<div class="b" style="left:1004px;top:244.3px;width:71.75px;height:1px;border-top:1px dotted #a5b4fc"></div>
<span class="t" style="left:1004.00px;top:259px;font-size:10px;line-height:15px;color:#1f2937;letter-spacing:-0.096px;-webkit-text-stroke:.18px #1f2937;">Jun 18, 2025 12:01 PM</span>
<span class="t" style="left:1109.30px;top:260px;font-size:10px;line-height:15px;color:#1f2937;font-weight:700;font-family:'DejaVu Sans',sans-serif;">→</span>
<span class="t" style="left:1121.00px;top:259px;font-size:10px;line-height:15px;color:#1f2937;letter-spacing:-0.091px;-webkit-text-stroke:.18px #1f2937;">Jun 18, 2025 12:01 PM</span>
<div class="b" style="left:1003.8px;top:292.3px;width:17.6px;height:6.6px;background:rgba(129,120,240,0.18);"></div>
<div class="b" style="left:1021.3px;top:292.3px;width:6.9px;height:6.6px;background:rgba(129,120,240,0.42);"></div>
<div class="b" style="left:1028px;top:292.3px;width:5.2px;height:6.6px;background:rgba(129,120,240,0.25);"></div>
<div class="b" style="left:1033.1px;top:292.3px;width:30.4px;height:6.6px;background:rgba(129,120,240,0.38);"></div>
<div class="b" style="left:1063.3px;top:292.3px;width:6.9px;height:6.6px;background:rgba(129,120,240,0.06);"></div>
<div class="b" style="left:1070px;top:292.3px;width:11.9px;height:6.6px;background:rgba(129,120,240,0.18);"></div>
<div class="b" style="left:1081.8px;top:292.3px;width:5.2px;height:6.6px;background:rgba(129,120,240,0.08);"></div>
<div class="b" style="left:1086.8px;top:292.3px;width:6.9px;height:6.6px;background:rgba(129,120,240,0.18);"></div>
<div class="b" style="left:1093.5px;top:292.3px;width:15.3px;height:6.6px;background:rgba(129,120,240,0.33);"></div>
<div class="b" style="left:1108.6px;top:292.3px;width:10.2px;height:6.6px;background:rgba(129,120,240,0.40);"></div>
<div class="b" style="left:1118.7px;top:292.3px;width:27px;height:6.6px;background:rgba(129,120,240,0.25);"></div>
<div class="b" style="left:1145.6px;top:292.3px;width:32.1px;height:6.6px;background:rgba(129,120,240,0.33);"></div>
<div class="b" style="left:1177.5px;top:292.3px;width:5.2px;height:6.6px;background:rgba(129,120,240,0.06);"></div>
<div class="b" style="left:1182.5px;top:292.3px;width:30.4px;height:6.6px;background:rgba(129,120,240,0.33);"></div>
<div class="b" style="left:1212.8px;top:292.3px;width:6.9px;height:6.6px;background:rgba(129,120,240,0.50);"></div>
<div class="b" style="left:1219.5px;top:292.3px;width:6.9px;height:6.6px;background:rgba(129,120,240,0.33);"></div>
<div class="b" style="left:1226.2px;top:292.3px;width:5.2px;height:6.6px;background:rgba(129,120,240,0.18);"></div>
<div class="b" style="left:1231.3px;top:292.3px;width:18.5px;height:6.6px;background:rgba(140,140,170,.2);"></div>
<div class="b" style="left:1039.8px;top:287.3px;width:11.8px;height:5px;background:rgba(129,120,240,0.07);"></div>
<div class="b" style="left:1057.6px;top:287.3px;width:5.4px;height:5px;background:rgba(129,120,240,0.12);"></div>
<div class="b" style="left:1087.8px;top:287.3px;width:11.4px;height:5px;background:rgba(129,120,240,0.16);"></div>
<div class="b" style="left:1125.4px;top:287.3px;width:10.1px;height:5px;background:rgba(129,120,240,0.12);"></div>
<div class="b" style="left:1196px;top:287.3px;width:5px;height:5px;background:rgba(129,120,240,0.12);"></div>
<div class="b" style="left:1231.3px;top:287.3px;width:6.7px;height:5px;background:rgba(129,120,240,0.14);"></div>
<span class="t" style="left:1004.00px;top:315px;font-size:10px;line-height:15px;color:#1f2937;letter-spacing:0.009px;-webkit-text-stroke:.18px #1f2937;">Jun 18, 2025 12:00 PM</span>
<span class="t" style="left:455.00px;top:352px;font-size:11.6px;line-height:16px;color:#4f46e5;font-weight:700;letter-spacing:-0.238px;">Tests</span>
<span class="t" style="left:500.00px;top:351px;font-size:11.9px;line-height:18px;color:#4b5563;letter-spacing:0.164px;">Statistics</span>
<span class="t" style="left:566.25px;top:351px;font-size:11.9px;line-height:18px;color:#4b5563;letter-spacing:0.058px;">Defects</span>
<div class="b" style="left:454.5px;top:375px;width:809.5px;height:1px;background:#eceef1;"></div>
<div class="b" style="left:454.5px;top:374.5px;width:29px;height:1.6px;background:#4f46e5;"></div>
<div class="b" style="left:454.5px;top:384.5px;width:70.5px;height:25.75px;background:#e5e7eb;border-radius:4px"></div>
<span class="t" style="left:466.25px;top:389px;font-size:11.4px;line-height:16px;color:#4b5563;letter-spacing:-0.129px;">Passed</span>
<span class="t" style="left:507.00px;top:389px;font-size:11.4px;line-height:16px;color:#10b981;">9</span>
<div class="b" style="left:530.5px;top:384.5px;width:63.75px;height:25.75px;background:#e5e7eb;border-radius:4px"></div>
<span class="t" style="left:542.00px;top:389px;font-size:11.4px;line-height:16px;color:#4b5563;letter-spacing:-0.092px;">Failed</span>
<span class="t" style="left:576.25px;top:389px;font-size:11.4px;line-height:16px;color:#ef4444;">4</span>
<div class="b" style="left:600px;top:384.5px;width:74.5px;height:25.75px;background:#e5e7eb;border-radius:4px"></div>
<span class="t" style="left:611.25px;top:389px;font-size:11.4px;line-height:16px;color:#4b5563;letter-spacing:0.115px;">Skipped</span>
<span class="t" style="left:656.75px;top:389px;font-size:11.4px;line-height:16px;color:#f59e0b;">0</span>
<div class="b" style="left:680.25px;top:384.5px;width:75.25px;height:25.75px;background:#e5e7eb;border-radius:4px"></div>
<span class="t" style="left:692.00px;top:389px;font-size:11.4px;line-height:16px;color:#4b5563;letter-spacing:0.023px;">Pending</span>
<span class="t" style="left:737.50px;top:389px;font-size:11.4px;line-height:16px;color:#4b5563;">0</span>
<div class="b" style="left:761.2px;top:384.5px;width:46.7px;height:25.75px;background:#e5e7eb;border-radius:4px"></div>
<svg class="b" style="left:772.6px;top:390.7px;" width="14.4" height="14.4" viewBox="0 0 24 24"><path fill="#374151" d="M13,10H11V6H13V10M13,12H11V14H13V12M22,4V16A2,2 0 0,1 20,18H6L2,22V4A2,2 0 0,1 4,2H20A2,2 0 0,1 22,4M20,4H4V17.2L5.2,16H20V4Z"/></svg>
<span class="t" style="left:789.50px;top:389px;font-size:11.4px;line-height:16px;color:#6366f1;">4</span>
<div class="b" style="left:816.3px;top:384.2px;width:152.4px;height:26px;background:#ffffff;border:1px solid #e5e7eb;border-radius:4px"></div>
<svg class="b" style="left:823.6px;top:390.2px;" width="14" height="14" viewBox="0 0 24 24"><path fill="#9ca3af" d="M9.5,3A6.5,6.5 0 0,1 16,9.5C16,11.11 15.41,12.59 14.44,13.73L14.71,14H15.5L20.5,19L19,20.5L14,15.5V14.71L13.73,14.44C12.59,15.41 11.11,16 9.5,16A6.5,6.5 0 0,1 3,9.5A6.5,6.5 0 0,1 9.5,3M9.5,5C7,5 5,7 5,9.5C5,12 7,14 9.5,14C12,14 14,12 14,9.5C14,7 12,5 9.5,5Z"/></svg>
<div class="clip" style="left:840px;top:388px;width:111px;height:18px">
<span class="t" style="left:4.50px;top:1px;font-size:10.6px;line-height:16px;color:#6b7280;letter-spacing:-0.049px;">Search by title/message</span>
</div>
<span class="t" style="left:455.00px;top:419px;font-size:11.6px;line-height:16px;color:#111827;letter-spacing:0.027px;">sort by:</span>
<span class="t" style="left:497.00px;top:419px;font-size:11.6px;line-height:16px;color:#6366f1;letter-spacing:-0.051px;">suite</span>
<span class="t" style="left:524.50px;top:419px;font-size:11.6px;line-height:16px;color:#111827;">/</span>
<span class="t" style="left:532.00px;top:419px;font-size:11.6px;line-height:16px;color:#6366f1;letter-spacing:0.006px;">testcase</span>
<span class="t" style="left:579.50px;top:419px;font-size:11.6px;line-height:16px;color:#111827;">/</span>
<span class="t" style="left:586.00px;top:419px;font-size:11.6px;line-height:16px;color:#6366f1;letter-spacing:0.022px;">failure</span>
<div class="b" style="left:497px;top:434px;width:24.25px;height:1px;border-top:1px dotted #a5b4fc"></div>
<div class="b" style="left:532px;top:434px;width:43.25px;height:1px;border-top:1px dotted #a5b4fc"></div>
<div class="b" style="left:586px;top:434px;width:31.75px;height:1px;border-top:1px dotted #a5b4fc"></div>
<svg class="b" style="left:455.20px;top:448.95px" width="8.6" height="8.6" viewBox="0 0 20 20"><circle cx="10" cy="10" r="10" fill="#12b76a"/><path d="M5.3 10.4L8.6 13.6L14.8 7" fill="none" stroke="#fff" stroke-width="2.4" stroke-linecap="round" stroke-linejoin="round"/></svg>
<svg class="b" style="left:469.7px;top:446.05px;" width="14.2" height="14.2" viewBox="0 0 24 24"><path fill="#5f6b7d" d="M19 3H14.82C14.4 1.84 13.3 1 12 1S9.6 1.84 9.18 3H5C3.9 3 3 3.9 3 5V19C3 20.1 3.9 21 5 21H19C20.1 21 21 20.1 21 19V5C21 3.9 20.1 3 19 3M12 3C12.55 3 13 3.45 13 4S12.55 5 12 5 11 4.55 11 4 11.45 3 12 3M7 7H17V5H19V19H5V5H7V7M7 17V15H9V17H7M7 13V11H9V13H7M11 17V15H17V17H11M11 13V11H17V13H11Z"/></svg>
<span class="t" style="left:489.00px;top:445px;font-size:9.9px;line-height:15px;color:#6b7280;font-family:'DejaVu Sans Mono','Liberation Mono',monospace;letter-spacing:-0.010px;-webkit-text-stroke:.25px #6b7280;">@first Create Todos…</span>
<div class="b" style="left:621.75px;top:446.25px;width:14px;height:14px;background:#f7f5ff;border-radius:4px"></div>
<svg class="b" style="left:623.90px;top:448.25px" width="10.2" height="10.2" viewBox="0 0 24 24"><g fill="none" stroke="#7c3aed" stroke-width="2.3" stroke-linecap="round"><path d="M21.6 9.4A10.4 10.4 0 1 0 9.4 21.6"/><path d="M17.2 9.8A6.2 6.2 0 1 0 9.8 17.2"/></g><path fill="#6d28d9" d="M10.4 10.4L23.6 15.2L19.2 17.1L23.8 21.7L21.7 23.8L17.1 19.2L15.2 23.6Z"/></svg>
<span class="t" style="left:639.10px;top:444px;font-size:11.72px;line-height:17px;color:#111111;letter-spacing:-0.081px;">Create a new todo item</span>
<svg class="b" style="left:455.20px;top:471.10px" width="8.6" height="8.6" viewBox="0 0 20 20"><circle cx="10" cy="10" r="10" fill="#12b76a"/><path d="M5.3 10.4L8.6 13.6L14.8 7" fill="none" stroke="#fff" stroke-width="2.4" stroke-linecap="round" stroke-linejoin="round"/></svg>
<svg class="b" style="left:469.7px;top:468.2px;" width="14.2" height="14.2" viewBox="0 0 24 24"><path fill="#5f6b7d" d="M19 3H14.82C14.4 1.84 13.3 1 12 1S9.6 1.84 9.18 3H5C3.9 3 3 3.9 3 5V19C3 20.1 3.9 21 5 21H19C20.1 21 21 20.1 21 19V5C21 3.9 20.1 3 19 3M12 3C12.55 3 13 3.45 13 4S12.55 5 12 5 11 4.55 11 4 11.45 3 12 3M7 7H17V5H19V19H5V5H7V7M7 17V15H9V17H7M7 13V11H9V13H7M11 17V15H17V17H11M11 13V11H17V13H11Z"/></svg>
<span class="t" style="left:489.00px;top:467px;font-size:9.9px;line-height:15px;color:#6b7280;font-family:'DejaVu Sans Mono','Liberation Mono',monospace;letter-spacing:-0.010px;-webkit-text-stroke:.25px #6b7280;">@first Create Todos…</span>
<div class="b" style="left:621.75px;top:468.4px;width:14px;height:14px;background:#f7f5ff;border-radius:4px"></div>
<svg class="b" style="left:623.90px;top:470.40px" width="10.2" height="10.2" viewBox="0 0 24 24"><g fill="none" stroke="#7c3aed" stroke-width="2.3" stroke-linecap="round"><path d="M21.6 9.4A10.4 10.4 0 1 0 9.4 21.6"/><path d="M17.2 9.8A6.2 6.2 0 1 0 9.8 17.2"/></g><path fill="#6d28d9" d="M10.4 10.4L23.6 15.2L19.2 17.1L23.8 21.7L21.7 23.8L17.1 19.2L15.2 23.6Z"/></svg>
<span class="t" style="left:639.10px;top:466px;font-size:11.72px;line-height:17px;color:#111111;">Create multiple todo items</span>
<svg class="b" style="left:455.20px;top:493.25px" width="8.6" height="8.6" viewBox="0 0 20 20"><circle cx="10" cy="10" r="10" fill="#12b76a"/><path d="M5.3 10.4L8.6 13.6L14.8 7" fill="none" stroke="#fff" stroke-width="2.4" stroke-linecap="round" stroke-linejoin="round"/></svg>
<svg class="b" style="left:469.7px;top:490.35px;" width="14.2" height="14.2" viewBox="0 0 24 24"><path fill="#5f6b7d" d="M19 3H14.82C14.4 1.84 13.3 1 12 1S9.6 1.84 9.18 3H5C3.9 3 3 3.9 3 5V19C3 20.1 3.9 21 5 21H19C20.1 21 21 20.1 21 19V5C21 3.9 20.1 3 19 3M12 3C12.55 3 13 3.45 13 4S12.55 5 12 5 11 4.55 11 4 11.45 3 12 3M7 7H17V5H19V19H5V5H7V7M7 17V15H9V17H7M7 13V11H9V13H7M11 17V15H17V17H11M11 13V11H17V13H11Z"/></svg>
<span class="t" style="left:489.00px;top:489px;font-size:9.9px;line-height:15px;color:#6b7280;font-family:'DejaVu Sans Mono','Liberation Mono',monospace;letter-spacing:-0.010px;-webkit-text-stroke:.25px #6b7280;">@first Create Todos…</span>
<div class="b" style="left:621.75px;top:490.55px;width:14px;height:14px;background:#f7f5ff;border-radius:4px"></div>
<svg class="b" style="left:623.90px;top:492.55px" width="10.2" height="10.2" viewBox="0 0 24 24"><g fill="none" stroke="#7c3aed" stroke-width="2.3" stroke-linecap="round"><path d="M21.6 9.4A10.4 10.4 0 1 0 9.4 21.6"/><path d="M17.2 9.8A6.2 6.2 0 1 0 9.8 17.2"/></g><path fill="#6d28d9" d="M10.4 10.4L23.6 15.2L19.2 17.1L23.8 21.7L21.7 23.8L17.1 19.2L15.2 23.6Z"/></svg>
<span class="t" style="left:639.10px;top:488px;font-size:11.72px;line-height:17px;color:#111111;">Todos containing weird characters</span>
<svg class="b" style="left:455.20px;top:515.40px" width="8.6" height="8.6" viewBox="0 0 20 20"><circle cx="10" cy="10" r="10" fill="#12b76a"/><path d="M5.3 10.4L8.6 13.6L14.8 7" fill="none" stroke="#fff" stroke-width="2.4" stroke-linecap="round" stroke-linejoin="round"/></svg>
<svg class="b" style="left:469.7px;top:512.5px;" width="14.2" height="14.2" viewBox="0 0 24 24"><path fill="#5f6b7d" d="M19 3H14.82C14.4 1.84 13.3 1 12 1S9.6 1.84 9.18 3H5C3.9 3 3 3.9 3 5V19C3 20.1 3.9 21 5 21H19C20.1 21 21 20.1 21 19V5C21 3.9 20.1 3 19 3M12 3C12.55 3 13 3.45 13 4S12.55 5 12 5 11 4.55 11 4 11.45 3 12 3M7 7H17V5H19V19H5V5H7V7M7 17V15H9V17H7M7 13V11H9V13H7M11 17V15H17V17H11M11 13V11H17V13H11Z"/></svg>
<span class="t" style="left:489.00px;top:511px;font-size:9.9px;line-height:15px;color:#6b7280;font-family:'DejaVu Sans Mono','Liberation Mono',monospace;letter-spacing:-0.010px;-webkit-text-stroke:.25px #6b7280;">@first Create Todos…</span>
<div class="b" style="left:621.75px;top:512.7px;width:14px;height:14px;background:#f7f5ff;border-radius:4px"></div>
<svg class="b" style="left:623.90px;top:514.70px" width="10.2" height="10.2" viewBox="0 0 24 24"><g fill="none" stroke="#7c3aed" stroke-width="2.3" stroke-linecap="round"><path d="M21.6 9.4A10.4 10.4 0 1 0 9.4 21.6"/><path d="M17.2 9.8A6.2 6.2 0 1 0 9.8 17.2"/></g><path fill="#6d28d9" d="M10.4 10.4L23.6 15.2L19.2 17.1L23.8 21.7L21.7 23.8L17.1 19.2L15.2 23.6Z"/></svg>
<span class="t" style="left:639.10px;top:511px;font-size:11.72px;line-height:17px;color:#111111;">Todos containing weird characters</span>
<svg class="b" style="left:455.20px;top:537.55px" width="8.6" height="8.6" viewBox="0 0 20 20"><circle cx="10" cy="10" r="10" fill="#12b76a"/><path d="M5.3 10.4L8.6 13.6L14.8 7" fill="none" stroke="#fff" stroke-width="2.4" stroke-linecap="round" stroke-linejoin="round"/></svg>
<svg class="b" style="left:469.7px;top:534.65px;" width="14.2" height="14.2" viewBox="0 0 24 24"><path fill="#5f6b7d" d="M19 3H14.82C14.4 1.84 13.3 1 12 1S9.6 1.84 9.18 3H5C3.9 3 3 3.9 3 5V19C3 20.1 3.9 21 5 21H19C20.1 21 21 20.1 21 19V5C21 3.9 20.1 3 19 3M12 3C12.55 3 13 3.45 13 4S12.55 5 12 5 11 4.55 11 4 11.45 3 12 3M7 7H17V5H19V19H5V5H7V7M7 17V15H9V17H7M7 13V11H9V13H7M11 17V15H17V17H11M11 13V11H17V13H11Z"/></svg>
<span class="t" style="left:489.00px;top:533px;font-size:9.9px;line-height:15px;color:#6b7280;font-family:'DejaVu Sans Mono','Liberation Mono',monospace;letter-spacing:-0.010px;-webkit-text-stroke:.25px #6b7280;">@first Create Todos…</span>
<div class="b" style="left:621.75px;top:534.85px;width:14px;height:14px;background:#f7f5ff;border-radius:4px"></div>
<svg class="b" style="left:623.90px;top:536.85px" width="10.2" height="10.2" viewBox="0 0 24 24"><g fill="none" stroke="#7c3aed" stroke-width="2.3" stroke-linecap="round"><path d="M21.6 9.4A10.4 10.4 0 1 0 9.4 21.6"/><path d="M17.2 9.8A6.2 6.2 0 1 0 9.8 17.2"/></g><path fill="#6d28d9" d="M10.4 10.4L23.6 15.2L19.2 17.1L23.8 21.7L21.7 23.8L17.1 19.2L15.2 23.6Z"/></svg>
<span class="t" style="left:639.10px;top:533px;font-size:11.72px;line-height:17px;color:#111111;">Todos containing weird characters</span>
<svg class="b" style="left:455.20px;top:559.70px" width="8.6" height="8.6" viewBox="0 0 20 20"><circle cx="10" cy="10" r="10" fill="#12b76a"/><path d="M5.3 10.4L8.6 13.6L14.8 7" fill="none" stroke="#fff" stroke-width="2.4" stroke-linecap="round" stroke-linejoin="round"/></svg>
<svg class="b" style="left:469.7px;top:556.8px;" width="14.2" height="14.2" viewBox="0 0 24 24"><path fill="#5f6b7d" d="M19 3H14.82C14.4 1.84 13.3 1 12 1S9.6 1.84 9.18 3H5C3.9 3 3 3.9 3 5V19C3 20.1 3.9 21 5 21H19C20.1 21 21 20.1 21 19V5C21 3.9 20.1 3 19 3M12 3C12.55 3 13 3.45 13 4S12.55 5 12 5 11 4.55 11 4 11.45 3 12 3M7 7H17V5H19V19H5V5H7V7M7 17V15H9V17H7M7 13V11H9V13H7M11 17V15H17V17H11M11 13V11H17V13H11Z"/></svg>
<span class="t" style="left:489.00px;top:555px;font-size:9.9px;line-height:15px;color:#6b7280;font-family:'DejaVu Sans Mono','Liberation Mono',monospace;letter-spacing:-0.010px;-webkit-text-stroke:.25px #6b7280;">@first Create Todos…</span>
<div class="b" style="left:621.75px;top:557px;width:14px;height:14px;background:#f7f5ff;border-radius:4px"></div>
<svg class="b" style="left:623.90px;top:559.00px" width="10.2" height="10.2" viewBox="0 0 24 24"><g fill="none" stroke="#7c3aed" stroke-width="2.3" stroke-linecap="round"><path d="M21.6 9.4A10.4 10.4 0 1 0 9.4 21.6"/><path d="M17.2 9.8A6.2 6.2 0 1 0 9.8 17.2"/></g><path fill="#6d28d9" d="M10.4 10.4L23.6 15.2L19.2 17.1L23.8 21.7L21.7 23.8L17.1 19.2L15.2 23.6Z"/></svg>
<span class="t" style="left:639.10px;top:555px;font-size:11.72px;line-height:17px;color:#111111;letter-spacing:0.020px;">Text input field should be cleared after each item</span>
<svg class="b" style="left:455.20px;top:581.85px" width="8.6" height="8.6" viewBox="0 0 20 20"><circle cx="10" cy="10" r="10" fill="#ea3a3d"/><rect x="5.4" y="8.7" width="9.2" height="2.6" rx="1.1" fill="#fde8e8"/></svg>
<svg class="b" style="left:469.7px;top:578.95px;" width="14.2" height="14.2" viewBox="0 0 24 24"><path fill="#5f6b7d" d="M19 3H14.82C14.4 1.84 13.3 1 12 1S9.6 1.84 9.18 3H5C3.9 3 3 3.9 3 5V19C3 20.1 3.9 21 5 21H19C20.1 21 21 20.1 21 19V5C21 3.9 20.1 3 19 3M12 3C12.55 3 13 3.45 13 4S12.55 5 12 5 11 4.55 11 4 11.45 3 12 3M7 7H17V5H19V19H5V5H7V7M7 17V15H9V17H7M7 13V11H9V13H7M11 17V15H17V17H11M11 13V11H17V13H11Z"/></svg>
<span class="t" style="left:489.00px;top:577px;font-size:9.9px;line-height:15px;color:#6b7280;font-family:'DejaVu Sans Mono','Liberation Mono',monospace;letter-spacing:-0.010px;-webkit-text-stroke:.25px #6b7280;">@first Create Todos…</span>
<div class="b" style="left:621.75px;top:579.15px;width:14px;height:14px;background:#f7f5ff;border-radius:4px"></div>
<svg class="b" style="left:623.90px;top:581.15px" width="10.2" height="10.2" viewBox="0 0 24 24"><g fill="none" stroke="#7c3aed" stroke-width="2.3" stroke-linecap="round"><path d="M21.6 9.4A10.4 10.4 0 1 0 9.4 21.6"/><path d="M17.2 9.8A6.2 6.2 0 1 0 9.8 17.2"/></g><path fill="#6d28d9" d="M10.4 10.4L23.6 15.2L19.2 17.1L23.8 21.7L21.7 23.8L17.1 19.2L15.2 23.6Z"/></svg>
<span class="t" style="left:639.10px;top:577px;font-size:11.72px;line-height:17px;color:#111111;letter-spacing:0.024px;">Text input should be trimmed</span>
<svg class="b" style="left:455.20px;top:604.00px" width="8.6" height="8.6" viewBox="0 0 20 20"><circle cx="10" cy="10" r="10" fill="#ea3a3d"/><rect x="5.4" y="8.7" width="9.2" height="2.6" rx="1.1" fill="#fde8e8"/></svg>
<svg class="b" style="left:469.7px;top:601.1px;" width="14.2" height="14.2" viewBox="0 0 24 24"><path fill="#5f6b7d" d="M19 3H14.82C14.4 1.84 13.3 1 12 1S9.6 1.84 9.18 3H5C3.9 3 3 3.9 3 5V19C3 20.1 3.9 21 5 21H19C20.1 21 21 20.1 21 19V5C21 3.9 20.1 3 19 3M12 3C12.55 3 13 3.45 13 4S12.55 5 12 5 11 4.55 11 4 11.45 3 12 3M7 7H17V5H19V19H5V5H7V7M7 17V15H9V17H7M7 13V11H9V13H7M11 17V15H17V17H11M11 13V11H17V13H11Z"/></svg>
<span class="t" style="left:489.00px;top:600px;font-size:9.9px;line-height:15px;color:#6b7280;font-family:'DejaVu Sans Mono','Liberation Mono',monospace;letter-spacing:-0.010px;-webkit-text-stroke:.25px #6b7280;">@first Create Todos…</span>
<div class="b" style="left:621.75px;top:601.3px;width:14px;height:14px;background:#f7f5ff;border-radius:4px"></div>
<svg class="b" style="left:623.90px;top:603.30px" width="10.2" height="10.2" viewBox="0 0 24 24"><g fill="none" stroke="#7c3aed" stroke-width="2.3" stroke-linecap="round"><path d="M21.6 9.4A10.4 10.4 0 1 0 9.4 21.6"/><path d="M17.2 9.8A6.2 6.2 0 1 0 9.8 17.2"/></g><path fill="#6d28d9" d="M10.4 10.4L23.6 15.2L19.2 17.1L23.8 21.7L21.7 23.8L17.1 19.2L15.2 23.6Z"/></svg>
<span class="t" style="left:639.10px;top:599px;font-size:11.72px;line-height:17px;color:#111111;letter-spacing:0.032px;">New todos should be added to the bottom of the list</span>
<svg class="b" style="left:455.20px;top:626.15px" width="8.6" height="8.6" viewBox="0 0 20 20"><circle cx="10" cy="10" r="10" fill="#12b76a"/><path d="M5.3 10.4L8.6 13.6L14.8 7" fill="none" stroke="#fff" stroke-width="2.4" stroke-linecap="round" stroke-linejoin="round"/></svg>
<svg class="b" style="left:469.7px;top:623.25px;" width="14.2" height="14.2" viewBox="0 0 24 24"><path fill="#5f6b7d" d="M19 3H14.82C14.4 1.84 13.3 1 12 1S9.6 1.84 9.18 3H5C3.9 3 3 3.9 3 5V19C3 20.1 3.9 21 5 21H19C20.1 21 21 20.1 21 19V5C21 3.9 20.1 3 19 3M12 3C12.55 3 13 3.45 13 4S12.55 5 12 5 11 4.55 11 4 11.45 3 12 3M7 7H17V5H19V19H5V5H7V7M7 17V15H9V17H7M7 13V11H9V13H7M11 17V15H17V17H11M11 13V11H17V13H11Z"/></svg>
<span class="t" style="left:489.00px;top:622px;font-size:9.9px;line-height:15px;color:#6b7280;font-family:'DejaVu Sans Mono','Liberation Mono',monospace;letter-spacing:-0.010px;-webkit-text-stroke:.25px #6b7280;">@first Create Todos…</span>
<div class="b" style="left:621.75px;top:623.45px;width:14px;height:14px;background:#f7f5ff;border-radius:4px"></div>
<svg class="b" style="left:623.90px;top:625.45px" width="10.2" height="10.2" viewBox="0 0 24 24"><g fill="none" stroke="#7c3aed" stroke-width="2.3" stroke-linecap="round"><path d="M21.6 9.4A10.4 10.4 0 1 0 9.4 21.6"/><path d="M17.2 9.8A6.2 6.2 0 1 0 9.8 17.2"/></g><path fill="#6d28d9" d="M10.4 10.4L23.6 15.2L19.2 17.1L23.8 21.7L21.7 23.8L17.1 19.2L15.2 23.6Z"/></svg>
<span class="t" style="left:639.10px;top:621px;font-size:11.72px;line-height:17px;color:#111111;letter-spacing:-0.067px;">Footer should be visible when adding TODOs</span>
<svg class="b" style="left:455.20px;top:648.30px" width="8.6" height="8.6" viewBox="0 0 20 20"><circle cx="10" cy="10" r="10" fill="#12b76a"/><path d="M5.3 10.4L8.6 13.6L14.8 7" fill="none" stroke="#fff" stroke-width="2.4" stroke-linecap="round" stroke-linejoin="round"/></svg>
<svg class="b" style="left:469.7px;top:645.4px;" width="14.2" height="14.2" viewBox="0 0 24 24"><path fill="#5f6b7d" d="M19 3H14.82C14.4 1.84 13.3 1 12 1S9.6 1.84 9.18 3H5C3.9 3 3 3.9 3 5V19C3 20.1 3.9 21 5 21H19C20.1 21 21 20.1 21 19V5C21 3.9 20.1 3 19 3M12 3C12.55 3 13 3.45 13 4S12.55 5 12 5 11 4.55 11 4 11.45 3 12 3M7 7H17V5H19V19H5V5H7V7M7 17V15H9V17H7M7 13V11H9V13H7M11 17V15H17V17H11M11 13V11H17V13H11Z"/></svg>
<span class="t" style="left:489.00px;top:644px;font-size:9.9px;line-height:15px;color:#6b7280;font-family:'DejaVu Sans Mono','Liberation Mono',monospace;letter-spacing:-0.010px;-webkit-text-stroke:.25px #6b7280;">Mark as completed/n…</span>
<div class="b" style="left:621.75px;top:645.6px;width:14px;height:14px;background:#f7f5ff;border-radius:4px"></div>
<svg class="b" style="left:623.90px;top:647.60px" width="10.2" height="10.2" viewBox="0 0 24 24"><g fill="none" stroke="#7c3aed" stroke-width="2.3" stroke-linecap="round"><path d="M21.6 9.4A10.4 10.4 0 1 0 9.4 21.6"/><path d="M17.2 9.8A6.2 6.2 0 1 0 9.8 17.2"/></g><path fill="#6d28d9" d="M10.4 10.4L23.6 15.2L19.2 17.1L23.8 21.7L21.7 23.8L17.1 19.2L15.2 23.6Z"/></svg>
<span class="t" style="left:639.10px;top:643px;font-size:11.72px;line-height:17px;color:#111111;letter-spacing:0.003px;">Mark todos as completed</span>
<svg class="b" style="left:455.20px;top:670.45px" width="8.6" height="8.6" viewBox="0 0 20 20"><circle cx="10" cy="10" r="10" fill="#12b76a"/><path d="M5.3 10.4L8.6 13.6L14.8 7" fill="none" stroke="#fff" stroke-width="2.4" stroke-linecap="round" stroke-linejoin="round"/></svg>
<svg class="b" style="left:469.7px;top:667.55px;" width="14.2" height="14.2" viewBox="0 0 24 24"><path fill="#5f6b7d" d="M19 3H14.82C14.4 1.84 13.3 1 12 1S9.6 1.84 9.18 3H5C3.9 3 3 3.9 3 5V19C3 20.1 3.9 21 5 21H19C20.1 21 21 20.1 21 19V5C21 3.9 20.1 3 19 3M12 3C12.55 3 13 3.45 13 4S12.55 5 12 5 11 4.55 11 4 11.45 3 12 3M7 7H17V5H19V19H5V5H7V7M7 17V15H9V17H7M7 13V11H9V13H7M11 17V15H17V17H11M11 13V11H17V13H11Z"/></svg>
<span class="t" style="left:489.00px;top:666px;font-size:9.9px;line-height:15px;color:#6b7280;font-family:'DejaVu Sans Mono','Liberation Mono',monospace;letter-spacing:-0.010px;-webkit-text-stroke:.25px #6b7280;">Mark as completed/n…</span>
<div class="b" style="left:621.75px;top:667.75px;width:14px;height:14px;background:#f7f5ff;border-radius:4px"></div>
<svg class="b" style="left:623.90px;top:669.75px" width="10.2" height="10.2" viewBox="0 0 24 24"><g fill="none" stroke="#7c3aed" stroke-width="2.3" stroke-linecap="round"><path d="M21.6 9.4A10.4 10.4 0 1 0 9.4 21.6"/><path d="M17.2 9.8A6.2 6.2 0 1 0 9.8 17.2"/></g><path fill="#6d28d9" d="M10.4 10.4L23.6 15.2L19.2 17.1L23.8 21.7L21.7 23.8L17.1 19.2L15.2 23.6Z"/></svg>
<span class="t" style="left:639.10px;top:666px;font-size:11.72px;line-height:17px;color:#111111;letter-spacing:-0.001px;">Unmark completed todos</span>
<svg class="b" style="left:455.20px;top:692.60px" width="8.6" height="8.6" viewBox="0 0 20 20"><circle cx="10" cy="10" r="10" fill="#ea3a3d"/><rect x="5.4" y="8.7" width="9.2" height="2.6" rx="1.1" fill="#fde8e8"/></svg>
<svg class="b" style="left:469.7px;top:689.7px;" width="14.2" height="14.2" viewBox="0 0 24 24"><path fill="#5f6b7d" d="M19 3H14.82C14.4 1.84 13.3 1 12 1S9.6 1.84 9.18 3H5C3.9 3 3 3.9 3 5V19C3 20.1 3.9 21 5 21H19C20.1 21 21 20.1 21 19V5C21 3.9 20.1 3 19 3M12 3C12.55 3 13 3.45 13 4S12.55 5 12 5 11 4.55 11 4 11.45 3 12 3M7 7H17V5H19V19H5V5H7V7M7 17V15H9V17H7M7 13V11H9V13H7M11 17V15H17V17H11M11 13V11H17V13H11Z"/></svg>
<span class="t" style="left:489.00px;top:688px;font-size:9.9px;line-height:15px;color:#6b7280;font-family:'DejaVu Sans Mono','Liberation Mono',monospace;letter-spacing:-0.010px;-webkit-text-stroke:.25px #6b7280;">Mark as completed/n…</span>
<div class="b" style="left:621.75px;top:689.9px;width:14px;height:14px;background:#f7f5ff;border-radius:4px"></div>
<svg class="b" style="left:623.90px;top:691.90px" width="10.2" height="10.2" viewBox="0 0 24 24"><g fill="none" stroke="#7c3aed" stroke-width="2.3" stroke-linecap="round"><path d="M21.6 9.4A10.4 10.4 0 1 0 9.4 21.6"/><path d="M17.2 9.8A6.2 6.2 0 1 0 9.8 17.2"/></g><path fill="#6d28d9" d="M10.4 10.4L23.6 15.2L19.2 17.1L23.8 21.7L21.7 23.8L17.1 19.2L15.2 23.6Z"/></svg>
<span class="t" style="left:639.10px;top:688px;font-size:11.72px;line-height:17px;color:#111111;letter-spacing:-0.015px;">Mark all todos as completed</span>
<div class="b" style="left:1258.4px;top:440.5px;width:3.7px;height:250.3px;background:#c7d2fe;border-radius:2px"></div>
</main>
</div>
</body></html>
